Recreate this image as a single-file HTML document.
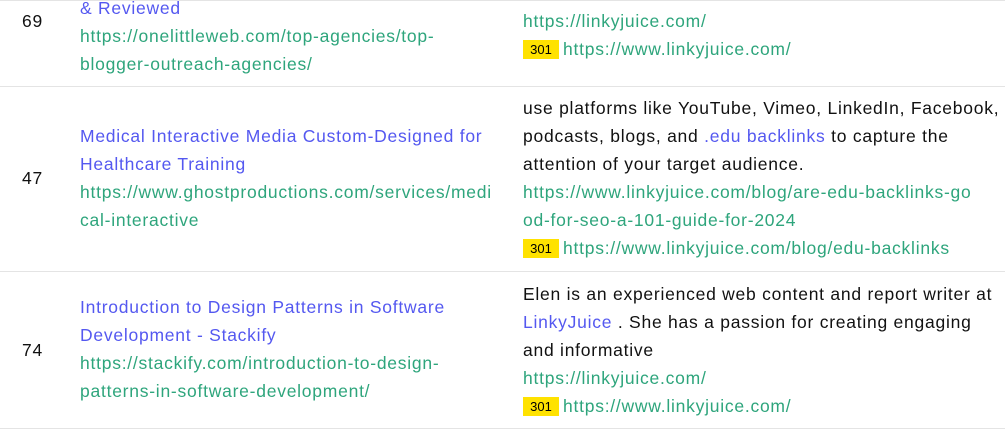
<!DOCTYPE html><html><head><style>
body{margin:0;width:1005px;height:430px;overflow:hidden;background:#fff;font-family:"Liberation Sans",sans-serif;font-size:17.5px;position:relative}
.l{position:absolute;white-space:nowrap;line-height:28px;height:28px;letter-spacing:0.75px}
.b{color:#5458f0}.g{color:#2ea57c}.k{color:#111}
.hr{position:absolute;left:0;width:1005px;height:1px;background:#e4e4e4}
.bd{display:inline-block;background:#ffe200;color:#000;font-size:13px;letter-spacing:0;line-height:19px;height:19px;width:36px;text-align:center;vertical-align:middle;margin-right:4px;position:relative;top:-1px}
</style></head><body>
<div class="hr" style="top:0"></div>
<div class="hr" style="top:86px"></div>
<div class="hr" style="top:271px"></div>
<div class="hr" style="top:428px"></div>

<div class="l k" style="left:22px;top:7px">69</div>
<div class="l b" style="left:80px;top:-6px">&amp; Reviewed</div>
<div class="l g" style="left:80px;top:22px">https://onelittleweb.com/top-agencies/top-</div>
<div class="l g" style="left:80px;top:50px">blogger-outreach-agencies/</div>
<div class="l g" style="left:523px;top:7px">https://linkyjuice.com/</div>
<div class="l g" style="left:523px;top:35px"><span class="bd">301</span>https://www.linkyjuice.com/</div>

<div class="l k" style="left:22px;top:164px">47</div>
<div class="l b" style="left:80px;top:122px">Medical Interactive Media Custom-Designed for</div>
<div class="l b" style="left:80px;top:150px">Healthcare Training</div>
<div class="l g" style="left:80px;top:178px">https://www.ghostproductions.com/services/medi</div>
<div class="l g" style="left:80px;top:206px">cal-interactive</div>
<div class="l k" style="left:523px;top:94px">use platforms like YouTube, Vimeo, LinkedIn, Facebook,</div>
<div class="l k" style="left:523px;top:122px">podcasts, blogs, and <span class="b">.edu backlinks</span> to capture the</div>
<div class="l k" style="left:523px;top:150px">attention of your target audience.</div>
<div class="l g" style="left:523px;top:178px">https://www.linkyjuice.com/blog/are-edu-backlinks-go</div>
<div class="l g" style="left:523px;top:206px">od-for-seo-a-101-guide-for-2024</div>
<div class="l g" style="left:523px;top:234px"><span class="bd">301</span>https://www.linkyjuice.com/blog/edu-backlinks</div>

<div class="l k" style="left:22px;top:336px">74</div>
<div class="l b" style="left:80px;top:293px">Introduction to Design Patterns in Software</div>
<div class="l b" style="left:80px;top:321px">Development - Stackify</div>
<div class="l g" style="left:80px;top:349px">https://stackify.com/introduction-to-design-</div>
<div class="l g" style="left:80px;top:377px">patterns-in-software-development/</div>
<div class="l k" style="left:523px;top:280px">Elen is an experienced web content and report writer at</div>
<div class="l k" style="left:523px;top:308px"><span class="b">LinkyJuice</span> . She has a passion for creating engaging</div>
<div class="l k" style="left:523px;top:336px">and informative</div>
<div class="l g" style="left:523px;top:364px">https://linkyjuice.com/</div>
<div class="l g" style="left:523px;top:392px"><span class="bd">301</span>https://www.linkyjuice.com/</div>
</body></html>
